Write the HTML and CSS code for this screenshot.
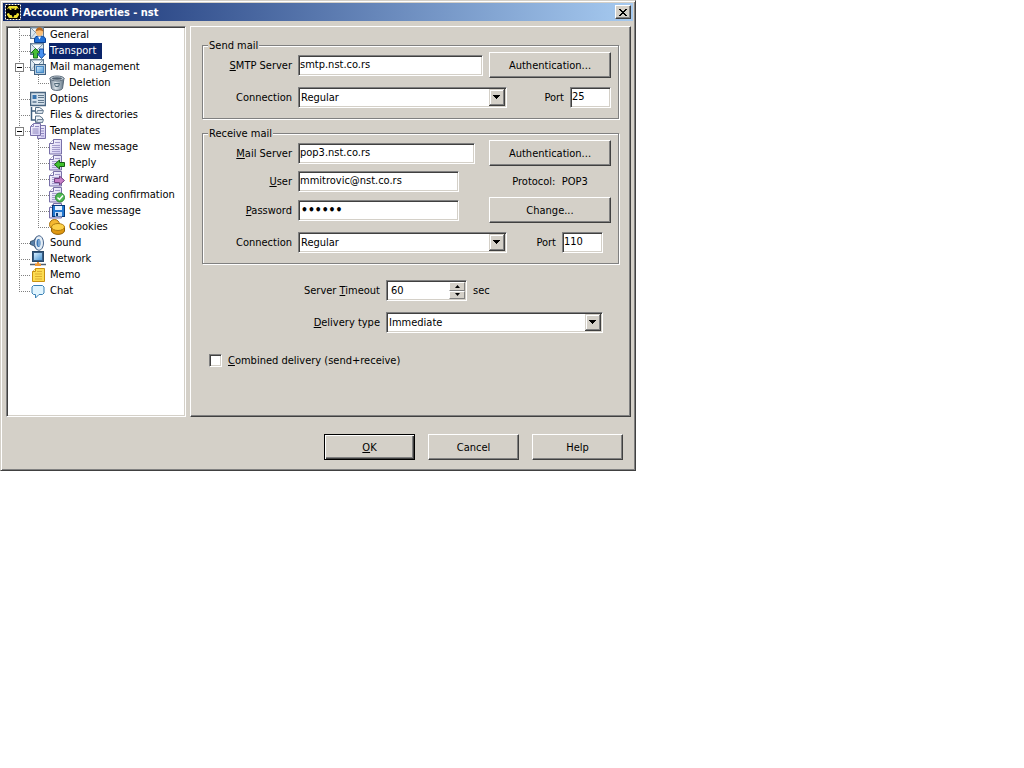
FILE: index.html
```
<!DOCTYPE html>
<html lang="en">
  <head>
    <meta charset="utf-8">
    <title>Account Properties - nst</title>
    <link rel="stylesheet" href="styles.css">
  </head>
  <body>
    <!-- shared shapes for the tree icons -->
    <svg class="defs" width="0" height="0">
      <defs>
        <linearGradient id="screen" x1="0" y1="0" x2="1" y2="1"><stop offset="0" stop-color="#d8f0ff"/><stop offset="1" stop-color="#4c96d4"/></linearGradient>
        <linearGradient id="metal" x1="0" y1="0" x2="1" y2="0"><stop offset="0" stop-color="#708090"/><stop offset=".4" stop-color="#dce4ea"/><stop offset="1" stop-color="#607484"/></linearGradient>
        <linearGradient id="paper" x1="0" y1="0" x2="1" y2="1"><stop offset="0" stop-color="#fff"/><stop offset="1" stop-color="#ccc4f0"/></linearGradient>
        <symbol id="env" viewBox="0 0 16 16">
          <rect x=".5" y=".5" width="13" height="11" fill="#dce8f0" stroke="#607890"/>
          <path d="M1 1l6 6 6-6z" fill="#f6fafc" stroke="#8098ac"/>
          <path d="M1 11l4-5M13 11L9 6" fill="none" stroke="#a4b6c6"/>
        </symbol>
        <symbol id="page" viewBox="0 0 16 16">
          <path d="M4.500.5h8v14.500H.5V4.500z" fill="url(#paper)" stroke="#7870a8"/>
          <path d="M.5 4.500h4v-4" fill="#fff" stroke="#7870a8"/>
          <path d="M6 3.500h5M3 6.500h8M3 8.500h8M3 10.500h8M3 12.500h8" stroke="#a49ccc"/>
        </symbol>
      </defs>
    </svg>

    <div class="window">
      <div class="titlebar">
        <svg class="icon" viewBox="0 0 16 16">
          <rect width="16" height="16" fill="#000"/>
          <rect x=".5" y=".5" width="15" height="15" fill="none" stroke="#fff" stroke-dasharray="2 1"/>
          <path d="M4 2h8l2 3v6l-2 3H4l-2-3V5z" fill="#f0e030"/>
          <path d="M1 6l3-2 1 2h1.500V4l1.500 1 1.500-1v2H11l1-2 3 2v4l-3-1-1 2H9.500L8 14l-1.500-3H5L4 9l-3 1z" fill="#000"/>
        </svg>
        <span class="title">Account Properties - nst</span>
        <button type="button" class="close" aria-label="Close">
          <svg width="8" height="7" viewBox="0 0 8 7"><path d="M0 0l7 7M1 0l7 7M7 0L0 7M8 0L1 7" stroke="#000"/></svg>
        </button>
      </div>

      <div class="content">
        <ul class="tree">
          <li><a href="#"><svg class="icon" viewBox="0 0 16 16"><use href="#env"/><path d="M4.500 15.500V12c0-2 2-3 5-3s6 1 6 3v3.500z" fill="#2070d8" stroke="#0c4090"/><path d="M8 9.500l1.500 3 1.500-3z" fill="#fff"/><circle cx="9.500" cy="5.500" r="3.500" fill="#fcc078"/><path d="M5.500 5.500c-.5-7 8.500-7 8 0-1-3-7-3-8 0z" fill="#b86820"/></svg><span>General</span></a></li>
          <li class="selected"><a href="#"><svg class="icon" viewBox="0 0 16 16"><use href="#env"/><path d="M5.500 5.500L10 10H7.500v5h-4v-5H1z" fill="#48c038" stroke="#14701c"/><path d="M11.500 15.500L7.500 11H9.500V6h4v5h2z" fill="#4890f0" stroke="#1850a0"/></svg><span>Transport</span></a></li>
          <li>
            <div class="node"><button type="button" class="toggle" aria-label="Collapse"></button><a href="#"><svg class="icon" viewBox="0 0 16 16"><use href="#env"/><rect x="4.500" y="5.500" width="11" height="10" fill="#b8ccdc" stroke="#406080"/><rect x="6.500" y="7.500" width="7" height="6" fill="url(#screen)" stroke="#4888c4"/></svg><span>Mail management</span></a></div>
            <ul>
              <li><a href="#"><svg class="icon" viewBox="0 0 16 16"><path d="M1 3l1.500 10.500c1 2.500 10 2.500 11 0L15 3z" fill="url(#metal)" stroke="#586878"/><ellipse cx="8" cy="3.500" rx="7" ry="2.500" fill="#c8d2da" stroke="#607080"/><ellipse cx="8" cy="3.500" rx="5" ry="1.200" fill="#506070"/><path d="M5.500 8.500h5l-1 3h-3z" fill="none" stroke="#506878"/></svg><span>Deletion</span></a></li>
            </ul>
          </li>
          <li><a href="#"><svg class="icon" viewBox="0 0 16 16"><rect x=".5" y="1.500" width="15" height="13" fill="#d4e0ea" stroke="#486480" stroke-width="1.500"/><rect x="2.500" y="4" width="4" height="4" fill="#3874b0"/><rect x="2.500" y="10" width="4" height="2" fill="#7890a8"/><path d="M8 4.500h6M8 6.500h6M8 9.500h6M8 11.500h6" stroke="#60788e"/></svg><span>Options</span></a></li>
          <li><a href="#"><svg class="icon" viewBox="0 0 16 16"><path d="M1.500 0v13h4M1.500 4h4" fill="none" stroke="#406080" stroke-width="1.500"/><path d="M5.500 6.500v-6h4l3 2v4z" fill="#f0f4f8" stroke="#587088"/><path d="M5.500 15.500V9h4l3 2v4.500z" fill="#f0f4f8" stroke="#587088"/><path d="M6.500 6.500l1-3h6l-1 3zM6.500 15.500l1-3h6l-1 3z" fill="#d4dee8" stroke="#708498"/></svg><span>Files &amp; directories</span></a></li>
          <li>
            <div class="node"><button type="button" class="toggle" aria-label="Collapse"></button><a href="#"><svg class="icon" viewBox="0 0 16 16"><path d="M8.500 2.500h7v13h-8z" fill="url(#paper)" stroke="#7870a8"/><path d="M11 5.500h3M11 8h3M11 10.500h3M11 13h3" stroke="#9088c0"/><path d="M3.500.5h7v12H.5v-9z" fill="url(#paper)" stroke="#7870a8"/><path d="M.5 3.500h3v-3M5 3.500h4M2.500 6h6M2.500 8h6M2.500 10h6" fill="none" stroke="#9088c0"/></svg><span>Templates</span></a></div>
            <ul>
              <li><a href="#"><svg class="icon" viewBox="0 0 16 16"><use href="#page"/></svg><span>New message</span></a></li>
              <li><a href="#"><svg class="icon" viewBox="0 0 16 16"><use href="#page"/><path d="M5.500 9.500L10.500 5v2.500h5v4h-5V14z" fill="#40c030" stroke="#145c14"/></svg><span>Reply</span></a></li>
              <li><a href="#"><svg class="icon" viewBox="0 0 16 16"><use href="#page"/><path d="M15.500 9.500L10.500 5v2.500h-5v4h5V14z" fill="#c880c8" stroke="#704080"/></svg><span>Forward</span></a></li>
              <li><a href="#"><svg class="icon" viewBox="0 0 16 16"><use href="#page"/><circle cx="11" cy="10.500" r="4.500" fill="#4cb850" stroke="#308838"/><path d="M8.500 10.500l2 2 3.500-4" fill="none" stroke="#fff" stroke-width="1.500"/></svg><span>Reading confirmation</span></a></li>
              <li><a href="#"><svg class="icon" viewBox="0 0 16 16"><use href="#page"/><rect x="3.500" y="2.500" width="12" height="11" fill="#2478d0" stroke="#083878"/><path d="M6 3h7v4H6z" fill="#e8f4ff"/><path d="M6 9h7v4.500H6z" fill="#c8dcf4"/><path d="M7 10h2v3H7z" fill="#083878"/></svg><span>Save message</span></a></li>
              <li><a href="#"><svg class="icon" viewBox="0 0 16 16"><circle cx="5.500" cy="5.500" r="5" fill="#f4b830" stroke="#a87010"/><path d="M2.500 8v4c1 4.500 12 4.500 13 0V8z" fill="#e09810" stroke="#906008"/><ellipse cx="9" cy="8" rx="6.500" ry="3.500" fill="#fcd048" stroke="#b07c10"/></svg><span>Cookies</span></a></li>
            </ul>
          </li>
          <li><a href="#"><svg class="icon" viewBox="0 0 16 16"><path d="M.5 6.500l3-1L7 1.500v13l-3.500-4-3-1z" fill="#5880a8" stroke="#385470"/><ellipse cx="9" cy="8" rx="4.500" ry="7.300" fill="#e4eef6" stroke="#48648c"/><ellipse cx="8.500" cy="8" rx="2" ry="4" fill="#3c78b8"/><path d="M9 5v6" stroke="#b8d4ec"/></svg><span>Sound</span></a></li>
          <li><a href="#"><svg class="icon" viewBox="0 0 16 16"><rect x="2.500" y=".5" width="11" height="10" fill="#385c84" stroke="#284868"/><rect x="4" y="2" width="8" height="7" fill="url(#screen)"/><path d="M0 13.500h16" stroke="#506070" stroke-width="1.500"/><path d="M7 11h2v1.500h2V15H5v-2.500h2z" fill="#f09838"/></svg><span>Network</span></a></li>
          <li><a href="#"><svg class="icon" viewBox="0 0 16 16"><path d="M5.500 1.500h9v13h-12v-10z" fill="#fcdc50" stroke="#c89010"/><path d="M2.500 4.500h3v-3" fill="#fff4b8" stroke="#c89010"/><path d="M7 4.500h5M5 7h7M5 9.500h7M5 12h7" stroke="#dcac30"/></svg><span>Memo</span></a></li>
          <li><a href="#"><svg class="icon" viewBox="0 0 16 16"><path d="M3.500 2.500h9l1.500 1.500v6l-1.500 1.500H9L5.500 15v-3.500h-2L2 10V4z" fill="#e0f4fe" stroke="#3880b4"/></svg><span>Chat</span></a></li>
        </ul>

        <form class="panel" id="account">
          <fieldset>
            <legend>Send mail</legend>
            <div class="row">
              <label for="smtp"><u>S</u>MTP Server</label>
              <input type="text" id="smtp" class="server" value="smtp.nst.co.rs">
              <button type="button" class="side">Authentication...</button>
            </div>
            <div class="row connection">
              <label for="sendConnection">Connection</label>
              <select id="sendConnection"><option>Regular</option></select>
              <div class="port">
                <label for="sendPort">Port</label>
                <input type="text" id="sendPort" value="25">
              </div>
            </div>
          </fieldset>
          <fieldset>
            <legend>Receive mail</legend>
            <div class="row">
              <label for="pop"><u>M</u>ail Server</label>
              <input type="text" id="pop" class="mail" value="pop3.nst.co.rs">
              <button type="button" class="side">Authentication...</button>
            </div>
            <div class="row">
              <label for="user"><u>U</u>ser</label>
              <input type="text" id="user" value="mmitrovic@nst.co.rs">
              <span class="side">Protocol:&nbsp; POP3</span>
            </div>
            <div class="row">
              <label for="password"><u>P</u>assword</label>
              <input type="password" id="password" value="secret">
              <button type="button" class="side">Change...</button>
            </div>
            <div class="row connection">
              <label for="receiveConnection">Connection</label>
              <select id="receiveConnection"><option>Regular</option></select>
              <div class="port inset">
                <label for="receivePort">Port</label>
                <input type="text" id="receivePort" value="110">
              </div>
            </div>
          </fieldset>
          <div class="delivery">
            <div class="row">
              <label for="timeout">Server <u>T</u>imeout</label>
              <div class="spinner">
                <input type="text" id="timeout" value="60">
                <div class="steps">
                  <button type="button" aria-label="Increase"><svg width="5" height="3" viewBox="0 0 5 3"><path d="M0 3l2.500-3L5 3z"/></svg></button>
                  <button type="button" aria-label="Decrease"><svg width="5" height="3" viewBox="0 0 5 3"><path d="M0 0l2.500 3L5 0z"/></svg></button>
                </div>
              </div>
              <span>sec</span>
            </div>
            <div class="row">
              <label for="deliveryType"><u>D</u>elivery type</label>
              <select id="deliveryType"><option>Immediate</option></select>
            </div>
          </div>
          <div class="combined">
            <input type="checkbox" id="combined">
            <label for="combined"><u>C</u>ombined delivery (send+receive)</label>
          </div>
        </form>
      </div>

      <div class="buttons">
        <button type="submit" form="account" class="default"><u>O</u>K</button>
        <button type="button">Cancel</button>
        <button type="button">Help</button>
      </div>
    </div>
  </body>
</html>
```
FILE: styles.css
```
body {
  margin: 0;
  background: #fff;
}
body, button, input, select {
  font-family: Tahoma, "DejaVu Sans Condensed", "DejaVu Sans", sans-serif;
  font-size: 11px;
  line-height: 13px;
  color: #000;
}
* {
  box-sizing: border-box;
}
.defs {
  display: block;
}
.window {
  max-width: 636px;
  padding: 1px;
  background: #d4d0c8;
  border: 1px solid;
  border-color: #d4d0c8 #404040 #404040 #d4d0c8;
  box-shadow: inset 1px 1px #fff, inset -1px -1px #808080;
}

/* title bar */
.titlebar {
  display: flex;
  align-items: center;
  gap: 2px;
  height: 18px;
  margin: 1px;
  padding: 0 2px;
  background: linear-gradient(to right, #0a246a, #a6caf0);
}
.title {
  flex: 1;
  font-weight: bold;
  color: #fff;
}
.icon {
  width: 16px;
  height: 16px;
  flex: none;
}

/* buttons */
button {
  display: flex;
  align-items: center;
  justify-content: center;
  padding: 0;
  background: #d4d0c8;
  border: 1px solid;
  border-color: #fff #404040 #404040 #fff;
  box-shadow: inset -1px -1px #808080;
}
.close {
  width: 16px;
  height: 14px;
}
.buttons {
  display: flex;
  justify-content: flex-end;
  gap: 13px;
  padding: 17px 11px 9px;
}
.buttons button {
  width: 91px;
  height: 26px;
}
.buttons .default {
  border-color: #000;
  box-shadow: inset 1px 1px #fff, inset -1px -1px #404040, inset -2px -2px #808080;
}

/* tree */
.content {
  display: flex;
  gap: 4px;
  padding: 4px 3px 0 4px;
}
ul {
  margin: 0;
  padding: 0;
  list-style: none;
}
.tree {
  width: 180px;
  flex: none;
  background: #fff;
  border: 1px solid;
  border-color: #808080 #fff #fff #808080;
  box-shadow: inset 1px 1px #404040, inset -1px -1px #d4d0c8;
  padding: 0 1px;
}
.tree ul {
  margin-left: 19px;
}
.tree li {
  background-image:
    repeating-linear-gradient(to bottom, #808080 0 1px, transparent 1px 2px),
    repeating-linear-gradient(to right, #808080 0 1px, transparent 1px 2px);
  background-repeat: no-repeat;
  background-position: 11px 0, 11px 8px;
  background-size: 1px 100%, 11px 1px;
}
.tree li:first-child {
  background-position: 11px 0, 11px 8px;
}
.tree li:last-child {
  background-size: 1px 8px, 11px 1px;
}
.tree a {
  display: flex;
  align-items: center;
  height: 16px;
  padding-left: 22px;
  color: #000;
  text-decoration: none;
}
.tree a span {
  margin-left: 3px;
  padding: 1px 6px 2px 1px;
  white-space: nowrap;
}
.tree .selected span {
  background: #0a246a;
  color: #fff;
}
.node {
  display: flex;
  align-items: center;
  padding-left: 7px;
}
.node a {
  padding-left: 6px;
}
.toggle {
  width: 9px;
  height: 9px;
  background: linear-gradient(#000, #000) center / 5px 1px no-repeat #fff;
  border-color: #808080;
  box-shadow: none;
}

/* account form */
.panel {
  flex: 1;
  padding: 12px 11px 49px 11px;
  border: 1px solid;
  border-color: #fff #404040 #404040 #fff;
  box-shadow: inset -1px -1px #808080;
}
fieldset {
  min-width: 0;
  margin: 0 0 8px;
  padding: 0 7px 10px;
  border: 1px solid #808080;
  box-shadow: 1px 1px #fff, inset 1px 1px #fff;
}
legend {
  margin-left: -2px;
  padding: 0 1px;
  background: #d4d0c8;
}
.row {
  display: flex;
  align-items: center;
  gap: 6px;
  min-height: 21px;
  margin-bottom: 5px;
}
.row > label {
  width: 82px;
  text-align: right;
}
.row.connection {
  margin: 9px 0 0;
}
.side {
  width: 122px;
  margin-left: auto;
  text-align: center;
}
button.side {
  height: 26px;
}
.port {
  display: flex;
  align-items: center;
  gap: 6px;
  margin-left: auto;
}
.port.inset {
  margin-right: 8px;
}
input, select, .spinner {
  height: 21px;
  padding: 0 1px;
  background-color: #fff;
  border: 1px solid;
  border-color: #808080 #fff #fff #808080;
  border-radius: 0;
  box-shadow: inset 1px 1px #404040, inset -1px -1px #d4d0c8;
}
input {
  width: 161px;
  padding-bottom: 2px;
}
input[type="password"] {
  padding: 0 2px;
  font-size: 12px;
  font-weight: bold;
}
.server {
  width: 185px;
}
.mail {
  width: 177px;
}
.port input {
  width: 41px;
}
select {
  width: 209px;
  padding: 0 20px 0 2px;
  appearance: none;
  background-image: url("data:image/svg+xml,%3Csvg xmlns='http://www.w3.org/2000/svg' width='16' height='17' shape-rendering='crispEdges'%3E%3Cpath fill='%23404040' d='M0 0h16v17H0z'/%3E%3Cpath fill='%23d4d0c8' d='M0 0h15v16H0z'/%3E%3Cpath fill='%23808080' d='M1 1h14v15H1z'/%3E%3Cpath fill='%23fff' d='M1 1h13v14H1z'/%3E%3Cpath fill='%23d4d0c8' d='M2 2h12v13H2z'/%3E%3Cpath d='M4 6h7v1H4zM5 7h5v1H5zM6 8h3v1H6zM7 9h1v1H7z'/%3E%3C/svg%3E");
  background-repeat: no-repeat;
  background-position: right 1px center;
}
.delivery {
  padding-top: 8px;
}
.delivery .row {
  margin-bottom: 11px;
}
.delivery .row > label {
  width: 178px;
}
.delivery select {
  width: 217px;
}
.spinner {
  display: flex;
  width: 81px;
  padding: 1px;
}
.spinner input {
  flex: 1;
  width: 0;
  height: auto;
  padding: 0 3px;
  background: none;
  border: none;
  box-shadow: none;
}
.steps {
  display: flex;
  flex-direction: column;
  width: 16px;
}
.steps button {
  flex: 1;
  border-color: #fff #808080 #808080 #fff;
  box-shadow: none;
}
.combined {
  display: flex;
  align-items: center;
  gap: 6px;
  margin-top: 21px;
  padding-left: 7px;
}
.combined input {
  width: 13px;
  height: 13px;
  margin: 0;
  appearance: none;
}
.combined input:checked {
  background: linear-gradient(#000, #000) center / 5px 5px no-repeat #fff;
}
```
